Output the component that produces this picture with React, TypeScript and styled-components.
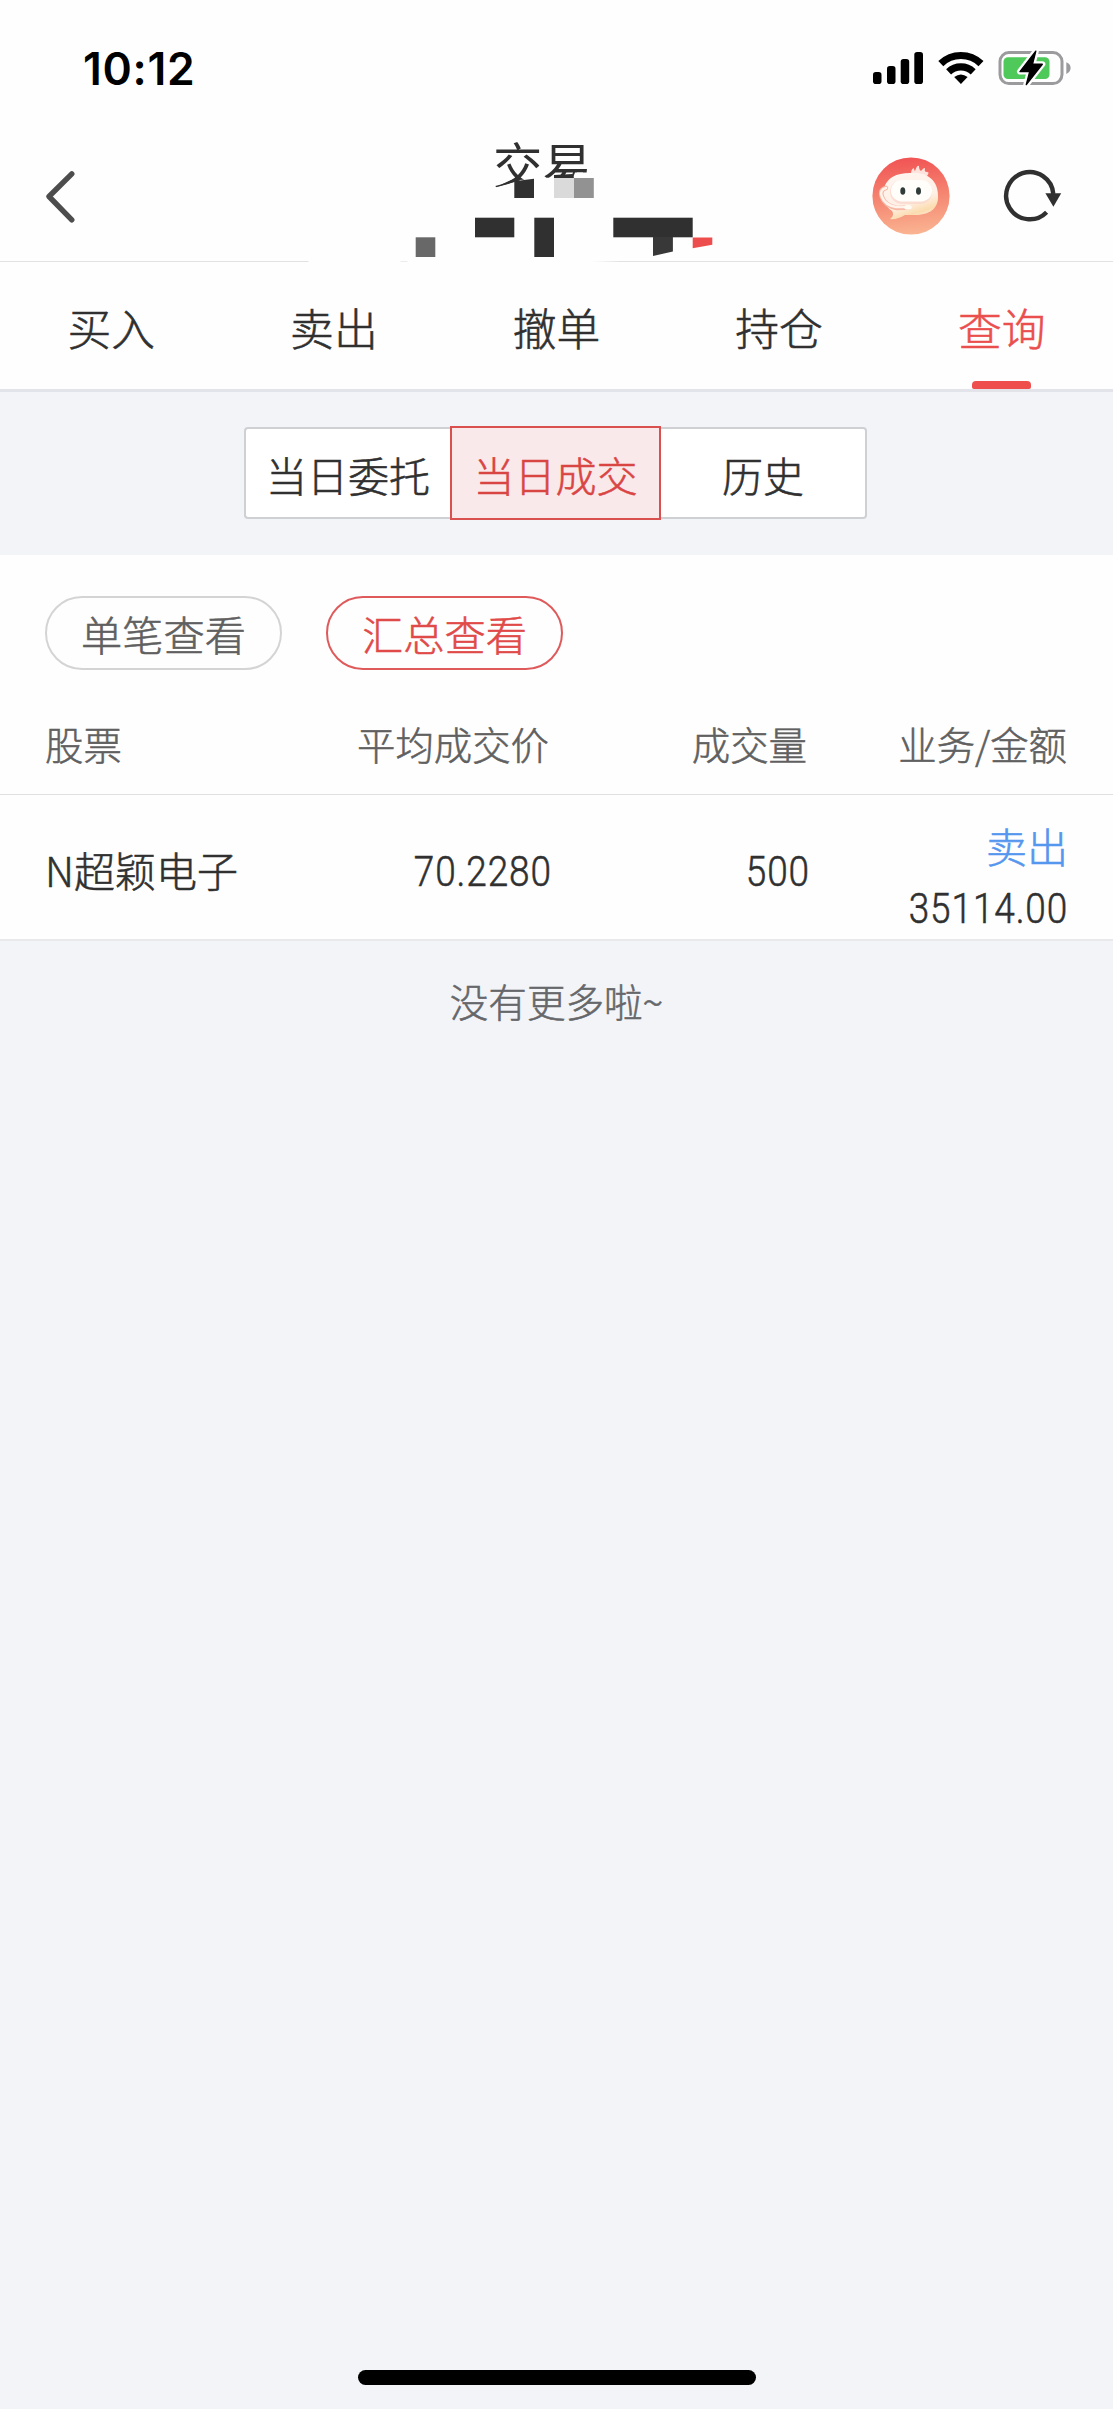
import React from 'react';
import styled, { createGlobalStyle } from 'styled-components';

const GlobalStyle = createGlobalStyle`
  * { box-sizing: border-box; }
  body {
    margin: 0;
    background: #f3f4f8;
    font-family: 'Noto Sans CJK SC', 'Liberation Sans', sans-serif;
    font-weight: 300;
    -webkit-text-stroke-width: 0.55px;
    color: #303030;
  }
`;

const Screen = styled.div`
  width: 1113px;
  height: 2409px;
  display: flex;
  flex-direction: column;
  background: #f3f4f8;
  overflow: hidden;
`;

const StatusBar = styled.header`
  height: 130px;
  flex: none;
  display: flex;
  align-items: center;
  justify-content: space-between;
  padding: 6px 42px 0 83px;
  background: #fefefe;
`;

const Clock = styled.time`
  padding-top: 1px;
  font: 600 44.5px/60px Inter, sans-serif;
  letter-spacing: 0.7px;
  -webkit-text-stroke-width: 0;
  color: #000;
`;

const StatusIcons = styled.svg`
  display: block;
  width: 200px;
  height: 40px;
`;

const NavBar = styled.nav`
  position: relative;
  height: 131px;
  flex: none;
  display: flex;
  align-items: center;
  justify-content: space-between;
  padding: 0 50px 0 40px;
  background: #fefefe;
`;

const NavActions = styled.div`
  display: flex;
  align-items: center;
  gap: 53px;
`;

const IconButton = styled.button`
  display: block;
  padding: 0;
  border: 0;
  background: none;
  line-height: 0;
`;

const Title = styled.h1`
  position: absolute;
  left: 493px;
  top: -2px;
  margin: 0;
  font-size: 49.5px;
  line-height: 72px;
  font-weight: 400;
  -webkit-text-stroke-width: 0;
  color: #303030;
`;

const Mosaic = styled.svg`
  position: absolute;
  left: 400px;
  top: 40px;
  width: 320px;
  height: 92px;
`;

const HairLine = styled.div`
  height: 1px;
  flex: none;
  background: linear-gradient(90deg, #e2e2e4 0 308px, #fefefe 309px 400px, #ececec 401px 407px, #fefefe 408px 591px, #e2e2e4 620px);
`;

const Tabs = styled.div`
  height: 130px;
  flex: none;
  display: grid;
  grid-template-columns: repeat(5, 1fr);
  background: #fefefe;
  border-bottom: 3px solid #e3e3ea;
`;

const Tab = styled.div<{ $active?: boolean }>`
  display: flex;
  flex-direction: column;
  align-items: center;
  justify-content: space-between;
  padding-top: 33px;
  font-size: 43.8px;
  line-height: 64px;
  color: ${(p) => (p.$active ? '#ea4f4d' : '#303030')};
  &::after {
    content: '';
    width: 59px;
    height: 8px;
    border-radius: 4px 4px 2px 2px;
    background: ${(p) => (p.$active ? '#ee4f4d' : 'transparent')};
  }
`;

const SegmentArea = styled.div`
  height: 163px;
  flex: none;
  display: flex;
  justify-content: center;
  padding: 34px 2px 0 0;
`;

const SegmentGroup = styled.div`
  display: flex;
  align-items: center;
  width: 623px;
  height: 94px;
`;

const Segment = styled.button<{ $active?: boolean; $side?: 'left' | 'right' }>`
  flex: ${(p) => (p.$active ? '0 0 211px' : '1 1 0')};
  height: ${(p) => (p.$active ? 94 : 92)}px;
  padding: 1px 0 0;
  font: inherit;
  font-size: 41px;
  color: ${(p) => (p.$active ? '#d94543' : '#303030')};
  background: ${(p) => (p.$active ? '#fae9eb' : '#fff')};
  border: ${(p) => (p.$active ? '2px solid #d9504f' : '2px solid #cfd0d3')};
  ${(p) => p.$side === 'left' && 'border-right: 0; border-radius: 4px 0 0 4px;'}
  ${(p) => p.$side === 'right' && 'border-left: 0; border-radius: 0 4px 4px 0;'}
`;

const Panel = styled.section`
  flex: none;
  height: 386px;
  display: flex;
  flex-direction: column;
  background: #fefefe;
  border-bottom: 2px solid #e9e9eb;
`;

const Pills = styled.div`
  display: flex;
  gap: 44px;
  padding: 41px 45px 0;
`;

const Pill = styled.button<{ $active?: boolean }>`
  width: 237px;
  height: 74px;
  padding: 0 0 1px;
  border-radius: 37px;
  font: inherit;
  font-size: 41.2px;
  line-height: 60px;
  background: transparent;
  color: ${(p) => (p.$active ? '#e04a48' : '#606060')};
  border: ${(p) => (p.$active ? '2px solid #de5a5b' : '2px solid #d4d4d4')};
`;

const Columns = styled.div`
  display: grid;
  grid-template-columns: 300px 204px 258px 260px;
  padding: 0 45px;
`;

const HeadRow = styled(Columns)`
  height: 125px;
  padding-top: 22px;
  font-size: 38.4px;
  line-height: 60px;
  color: #606060;
  border-bottom: 1px solid #e0e0e0;
`;

const BodyRow = styled(Columns)`
  height: 144px;
  padding-top: 1px;
  font-size: 41px;
`;

const Cell = styled.div<{ $right?: boolean }>`
  display: flex;
  flex-direction: column;
  justify-content: center;
  align-items: ${(p) => (p.$right ? 'flex-end' : 'flex-start')};
  white-space: nowrap;
`;

const FigureCell = styled(Cell)`
  padding: 6px 0 0;
  margin-right: -3px;
`;

const TradeCell = styled(Cell)`
  justify-content: flex-start;
  padding-top: 18px;
  margin-right: -1px;
`;

const Figure = styled.span`
  font: 300 42px/66px Roboto, sans-serif;
  letter-spacing: 1px;
  transform: scaleX(0.88);
  transform-origin: right center;
`;

const Side = styled.span`
  line-height: 62px;
  color: #5596ee;
`;

const EndNote = styled.p`
  margin: 29px 0 0;
  text-align: center;
  font-size: 38.6px;
  line-height: 60px;
  color: #66676a;
`;

const HomeIndicator = styled.div`
  width: 398px;
  height: 15px;
  margin: auto auto 24px 358px;
  border-radius: 8px;
  background: #000;
`;

const StatusGlyphs = () => (
  <StatusIcons viewBox="871 48 200 40">
    <rect x="873" y="72" width="8.5" height="12" rx="2.8" />
    <rect x="887" y="66" width="8.5" height="18" rx="2.8" />
    <rect x="900.7" y="59" width="8.5" height="25" rx="2.8" />
    <rect x="914.3" y="52" width="8.7" height="32" rx="2.8" />
    <g fill="none" stroke="#000" strokeWidth="7.2">
      <path d="M940.8 63.6A29 29 0 0 1 981 63.6" />
      <path d="M948.6 71.8A18 18 0 0 1 973.2 71.8" />
    </g>
    <path d="M960.9 84L954.2 77.1Q960.9 71.8 967.6 77.1Z" />
    <rect x="1000" y="52.6" width="62" height="31" rx="9" fill="#fefefe" stroke="#9b9a9d" strokeWidth="3" />
    <rect x="1003.5" y="57.3" width="46" height="21.8" rx="4.5" fill="#50c95b" />
    <path d="M1066.3 62.3Q1070.6 64 1070.6 68T1066.3 73.9Z" fill="#9b9a9d" />
    <path
      d="M1035.8 51.2L1020 71.6H1029.7L1026.3 84.6L1042.3 64.2H1032.5Z"
      stroke="#fefefe"
      strokeWidth="6"
      strokeLinejoin="round"
    />
    <path d="M1035.8 51.2L1020 71.6H1029.7L1026.3 84.6L1042.3 64.2H1032.5Z" stroke="#000" strokeWidth="1.4" strokeLinejoin="round" />
  </StatusIcons>
);

const BackIcon = () => (
  <svg width="40" height="56" viewBox="40 167 40 56">
    <path d="M71.8 172.8L49 195.5L71.8 218.8" fill="none" stroke="#4d4d4d" strokeWidth="5.4" strokeLinecap="round" strokeLinejoin="round" />
  </svg>
);

const Avatar = () => (
  <svg width="78" height="78" viewBox="0 0 78 78">
    <defs>
      <linearGradient id="disc" x1="0.4" y1="0" x2="0.5" y2="1">
        <stop offset="0" stopColor="#f15354" />
        <stop offset="0.55" stopColor="#f58973" />
        <stop offset="1" stopColor="#fab491" />
      </linearGradient>
      <linearGradient id="head" x1="0.3" y1="0" x2="0.7" y2="1">
        <stop offset="0" stopColor="#fff4ef" />
        <stop offset="0.6" stopColor="#fff0e6" />
        <stop offset="0.85" stopColor="#fbdcae" />
        <stop offset="1" stopColor="#fdece0" />
      </linearGradient>
    </defs>
    <circle cx="39" cy="39" r="38.6" fill="url(#disc)" />
    <path d="M39 17Q39 12 42 11Q42 14 43 14Q45 8 47 9Q47 13 49 14Q53 9 53 12Q52 15 55 15Q58 15 55 19Z" fill="#fde1db" />
    <path d="M12 31C15 21 24 16 38 16C54 14 66 23 66 38C67 52 57 58 43 58H33C28 61 22 63 18 62C21 60 22 57 20 54C14 50 9 42 12 31Z" fill="url(#head)" />
    <rect x="18" y="23" width="42" height="24" rx="12" fill="#f9d7cc" opacity="0.75" />
    <rect x="19" y="23" width="41" height="21.5" rx="10.7" fill="#fffefb" />
    <ellipse cx="30.8" cy="34" rx="2.5" ry="3.8" fill="#303c3a" />
    <ellipse cx="46.5" cy="34" rx="2.5" ry="3.8" fill="#303c3a" />
    <path d="M14 31Q7 33 10 40Q13 49 25 51L37 50.5" fill="none" stroke="#f7b8a4" strokeWidth="4.5" strokeLinecap="round" />
    <path d="M14 31Q7 33 10 40Q13 48 24 50L36 50" fill="none" stroke="#fff3eb" strokeWidth="2.6" strokeLinecap="round" />
    <ellipse cx="36" cy="50.3" rx="3.8" ry="2.5" fill="#fffaf2" />
  </svg>
);

const RefreshIcon = () => (
  <svg width="60" height="60" viewBox="1003 166 60 60">
    <path d="M1046.6 212.2A23.6 23.6 0 1 1 1053.3 194" fill="none" stroke="#303030" strokeWidth="4.4" />
    <path d="M1045.4 193.3H1061.2L1053.4 206.7Z" fill="#303030" />
  </svg>
);

const TitleMosaic = () => (
  <Mosaic viewBox="400 170 320 92">
    <path d="M490 189L496 187.2L508 184L519 180L534 179V177.8H573L575 172.6H592V205H490Z" fill="#fefefe" />
    <path d="M514.3 181.2L534 178.8V198H514.3Z" fill="#303030" />
    <path d="M496 187L510 180.5L518 177.5L520 180.5Z" fill="#303030" />
    <path d="M554 175L572.5 174L574 178H554Z" fill="#303030" />
    <rect x="554" y="178" width="20" height="20" fill="#dadada" />
    <rect x="574" y="178" width="19.8" height="20" fill="#929292" />
    <rect x="475" y="217.7" width="39.3" height="19.6" fill="#303030" />
    <rect x="534.3" y="217.7" width="19.7" height="39.3" fill="#303030" />
    <rect x="415.7" y="237.3" width="19.6" height="19.7" fill="#686868" />
    <rect x="613.3" y="217.7" width="79.4" height="19.6" fill="#303030" />
    <path d="M653 237H672.9V251.5L653 256Z" fill="#383838" />
    <path d="M692.7 237.5H712.3V244.7L692.7 248.2Z" fill="#ed4e4d" />
  </Mosaic>
);

const tabs = ['买入', '卖出', '撤单', '持仓', '查询'];

export default function App() {
  return (
    <>
      <GlobalStyle />
      <Screen>
        <StatusBar>
          <Clock>10:12</Clock>
          <StatusGlyphs />
        </StatusBar>
        <NavBar>
          <IconButton aria-label="返回"><BackIcon /></IconButton>
          <Title>交易</Title>
          <TitleMosaic />
          <NavActions>
            <IconButton aria-label="客服"><Avatar /></IconButton>
            <IconButton aria-label="刷新"><RefreshIcon /></IconButton>
          </NavActions>
        </NavBar>
        <HairLine />
        <Tabs>
          {tabs.map((label) => (
            <Tab key={label} $active={label === '查询'}>{label}</Tab>
          ))}
        </Tabs>
        <SegmentArea>
          <SegmentGroup>
            <Segment $side="left">当日委托</Segment>
            <Segment $active>当日成交</Segment>
            <Segment $side="right">历史</Segment>
          </SegmentGroup>
        </SegmentArea>
        <Panel>
          <Pills>
            <Pill>单笔查看</Pill>
            <Pill $active>汇总查看</Pill>
          </Pills>
          <HeadRow>
            <Cell>股票</Cell>
            <Cell $right>平均成交价</Cell>
            <Cell $right>成交量</Cell>
            <Cell $right>业务/金额</Cell>
          </HeadRow>
          <BodyRow>
            <Cell>N超颖电子</Cell>
            <FigureCell $right><Figure>70.2280</Figure></FigureCell>
            <FigureCell $right><Figure>500</Figure></FigureCell>
            <TradeCell $right>
              <Side>卖出</Side>
              <Figure>35114.00</Figure>
            </TradeCell>
          </BodyRow>
        </Panel>
        <EndNote>没有更多啦~</EndNote>
        <HomeIndicator />
      </Screen>
    </>
  );
}
